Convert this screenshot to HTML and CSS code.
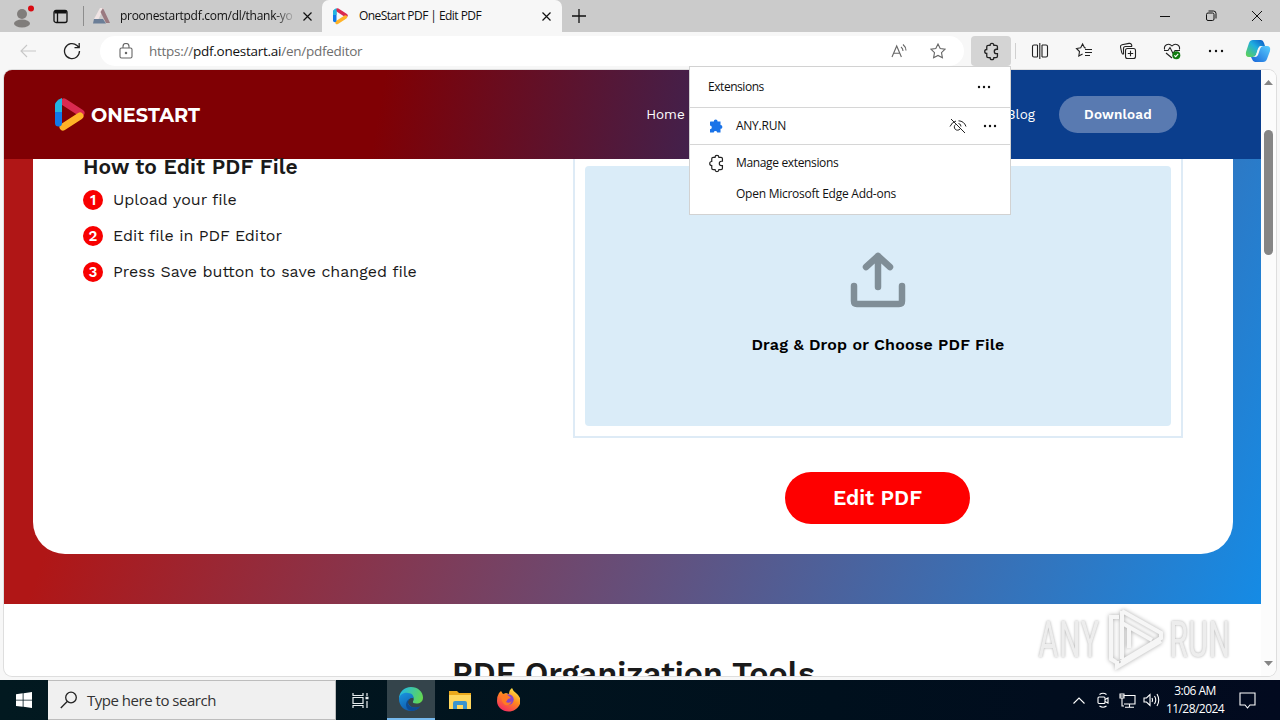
FILE: index.html
```
<!DOCTYPE html>
<html lang="en">
<head>
    <meta charset="UTF-8">
    <meta name="viewport" content="width=device-width, initial-scale=1.0">
    <title>OneStart PDF | Edit PDF</title>
    <link rel="stylesheet" href="styles.css">
</head>
<body>
    <svg class="defs" width="0" height="0">
        <symbol id="puzzle" viewBox="0 0 16 16">
            <path d="M5.2 2.8h1.6a1.6 1.6 0 0 1 3.2 0h1.8q1.2 0 1.2 1.2v2.1h-.8a1.8 1.8 0 0 0 0 3.7h.8V12q0 1.2-1.2 1.2H10a1.6 1.6 0 0 1-3.2 0H5.2Q4 13.200 4 12V9.700A1.700 1.700 0 0 1 4 6.300V4q0-1.200 1.200-1.200z"/>
        </symbol>
        <symbol id="onestart" viewBox="0 0 32 34">
            <path d="M10 4l17 11" stroke="#da2a50" stroke-width="7" stroke-linecap="round"/>
            <path d="M9 29l17-11" stroke="#ffb327" stroke-width="7" stroke-linecap="round"/>
            <path d="M4.500 7v18" stroke="#1178e8" stroke-width="7" stroke-linecap="round"/>
            <path d="M1 14V7q1-5 7-7v14z" fill="#22b5e0"/>
        </symbol>
    </svg>

    <div class="tabstrip">
        <svg class="avatar" width="24" height="28" viewBox="0 0 24 28">
            <circle cx="12" cy="12" r="5" fill="#807d7b"/>
            <ellipse cx="12" cy="21.500" rx="8" ry="4" fill="#807d7b"/>
            <circle cx="21" cy="6.500" r="3" fill="#d90b12"/>
        </svg>
        <svg class="tab-actions" width="15" height="15" viewBox="0 0 15 15" fill="none" stroke="#111" stroke-width="1.300">
            <rect x="1" y="1.500" width="13" height="12" rx="2"/>
            <path d="M1.500 3h12" stroke-width="3"/>
            <path d="M4.500 4v9.500"/>
        </svg>
        <span class="divider"></span>
        <div class="tab">
            <svg width="17" height="16" viewBox="0 0 17 16">
                <path d="M7 0h4L5.500 11H1z" fill="#f0e4e4"/>
                <path d="M10 0l7 15h-4L7.500 4z" fill="#9a7a80"/>
                <path d="M1 11h9l3 4.500H0z" fill="#6b7e97"/>
            </svg>
            <span class="tab-title faded">proonestartpdf.com/dl/thank-yo</span>
            <svg class="x" width="9" height="9" viewBox="0 0 9 9"><path d="M.5.5l8 8M8.500.5l-8 8"/></svg>
        </div>
        <div class="tab active">
            <svg width="17" height="17"><use href="#onestart"/></svg>
            <span class="tab-title">OneStart PDF | Edit PDF</span>
            <svg class="x" width="9" height="9" viewBox="0 0 9 9"><path d="M.5.5l8 8M8.500.5l-8 8"/></svg>
        </div>
        <svg class="newtab" width="14" height="14" viewBox="0 0 14 14"><path d="M7 0v14M0 7h14" stroke="#111" stroke-width="1.300"/></svg>
        <div class="window-buttons">
            <svg width="12" height="12" viewBox="0 0 12 12"><path d="M1 6.500h10"/></svg>
            <svg width="12" height="12" viewBox="0 0 12 12"><rect x="1.500" y="3" width="7.500" height="7.500" rx="1.500"/><path d="M3.500 1h5Q11 1 11 3.500v5"/></svg>
            <svg width="12" height="12" viewBox="0 0 12 12"><path d="M1 1l10 10M11 1L1 11"/></svg>
        </div>
    </div>

    <div class="toolbar">
        <svg class="back" width="16" height="14" viewBox="0 0 16 14"><path d="M16 7H1M7 1L1 7l6 6"/></svg>
        <svg class="reload" width="18" height="18" viewBox="0 0 18 18"><path d="M16.500 9A7.500 7.500 0 1 1 14 3.500L16 5.500M16.200 1v4.700h-4.700"/></svg>
        <div class="address">
            <svg class="lock" width="14" height="16" viewBox="0 0 14 16"><rect x="1" y="5" width="12" height="10" rx="1.500"/><path d="M4 5V3.500a3 3 0 0 1 6 0V5"/><circle cx="7" cy="10" r=".7"/></svg>
            <span class="url">https://<b>pdf.onestart.ai</b>/en/pdfeditor</span>
            <svg class="read" width="16" height="15" viewBox="0 0 16 15"><path d="M1 13L5.700 2l4.700 11M2.700 9.300h6M10 3q2 1.500 2 4M12 .5q3 2.500 3 6"/></svg>
            <svg class="star" width="16" height="16" viewBox="0 0 16 16"><path d="M8 1l2.200 4.500 4.900.7-3.600 3.500.9 5L8 12.400l-4.400 2.300.9-5L.9 6.200l4.900-.7z"/></svg>
        </div>
        <div class="ext-button"><svg width="19" height="19"><use href="#puzzle"/></svg></div>
        <span class="tool-divider"></span>
        <div class="tools">
            <svg width="18" height="18" viewBox="0 0 18 18"><path d="M6.500 3H3Q1.500 3 1.500 4.500v9Q1.500 15 3 15h3.500M11 3h4q1.500 0 1.500 1.500v9Q16.500 15 15 15h-4M6.500 3v12M11 3v12M8.800 1v16"/></svg>
            <svg width="18" height="18" viewBox="0 0 18 18"><path d="M11 6L9.500 5.800 7.600 2 5.700 5.800l-4.200.7 3 3-.7 4.500 3.800-2M10 7.500h7M10 10.500h7M10 13.500h5"/></svg>
            <svg width="18" height="18" viewBox="0 0 18 18"><rect x="6.500" y="6.500" width="10" height="10" rx="2"/><path d="M11.500 8.800v5.400M8.800 11.500h5.400M4.500 12.500Q3 12 2.700 10.500L1.500 5Q1.200 3.200 3 2.800l7-1.400Q12 1 12.500 2.700L13 4.500M4.500 12V6.500Q4.500 4.500 6.500 4.500H13"/></svg>
            <svg width="18" height="18" viewBox="0 0 18 18"><path d="M1.600 7.500C.5 3.500 5.500.2 9 4c3.500-3.800 8.500-.5 7.400 3.500M1 8.500h4l2-3 3 6 2-3h5M3 11l6 5"/><circle cx="13.300" cy="13.300" r="4" fill="#107c10" stroke="none"/><path d="M11.300 13.300l1.400 1.400 2.500-2.800" stroke="#fff"/></svg>
            <svg class="dots" width="18" height="18" viewBox="0 0 18 18"><circle cx="3" cy="9" r="1.200"/><circle cx="9" cy="9" r="1.200"/><circle cx="15" cy="9" r="1.200"/></svg>
        </div>
        <svg class="copilot" width="26" height="24" viewBox="0 0 26 24">
            <defs>
                <linearGradient id="cop1" x1="1" y1="0" x2="0" y2="1"><stop stop-color="#0b52c4"/><stop offset=".45" stop-color="#20aee0"/><stop offset="1" stop-color="#64d54b"/></linearGradient>
                <linearGradient id="cop2" x1="1" y1="0" x2="0" y2="1"><stop stop-color="#59cfff"/><stop offset="1" stop-color="#1764d8"/></linearGradient>
            </defs>
            <path d="M8 1h8q2 0 3 3l1 3h-4q-2 0-3 3l-2 6q-1 2-3 2H4q-4 0-3-5L4 4q1-3 4-3z" fill="url(#cop1)"/>
            <path d="M18 7h4q4 0 3 5l-3 8q-1 3-4 3h-8q-2 0-3-3l-1-2h3q2 0 3-3l2-6q1-2 4-2z" fill="url(#cop2)"/>
            <path d="M16 7h2q-2 0-3 3l-2 6q-1 2-3 2H8q2 0 3-2l2-6q1-3 3-3z" fill="#f7f7f7"/>
        </svg>
    </div>

    <div class="browser-body">
        <div class="page">
            <header class="site-header">
                <svg width="32" height="34"><use href="#onestart"/></svg>
                <span class="brand">ONESTART</span>
                <nav>
                    <a class="home">Home</a>
                    <a class="blog">Blog</a>
                    <a class="download">Download</a>
                </nav>
            </header>
            <section class="hero">
                <div class="card">
                    <div class="how-to">
                        <h2>How to Edit PDF File</h2>
                        <ol>
                            <li><span class="num">1</span><span>Upload your file</span></li>
                            <li><span class="num">2</span><span>Edit file in PDF Editor</span></li>
                            <li><span class="num">3</span><span>Press Save button to save changed file</span></li>
                        </ol>
                    </div>
                    <div class="upload">
                        <div class="drop-frame">
                            <div class="drop-area">
                                <svg width="56" height="56" viewBox="0 0 56 56"><path d="M28 35V4M16 15L28 4 40 15M4 34v15q0 3 3 3h42q3 0 3-3V34"/></svg>
                                <p>Drag &amp; Drop or Choose PDF File</p>
                            </div>
                        </div>
                        <button>Edit PDF</button>
                    </div>
                </div>
            </section>
            <section class="tools-section">
                <h2>PDF Organization Tools</h2>
            </section>
        </div>
        <div class="scrollbar">
            <svg width="9" height="5" viewBox="0 0 9 5"><path d="M0 5l4.500-5L9 5z"/></svg>
            <div class="thumb"></div>
            <svg class="down" width="9" height="5" viewBox="0 0 9 5"><path d="M0 0l4.500 5L9 0z"/></svg>
        </div>
    </div>

    <div class="taskbar">
        <div class="start"><svg width="16" height="16" viewBox="0 0 16 16" fill="#fff"><path d="M0 2.200L6.700 1.300v6.400H0zM7.500 1.200L16 0v7.700H7.500zM0 8.500h6.700v6.300L0 14zM7.500 8.500H16V16l-8.500-1.200z"/></svg></div>
        <div class="search">
            <svg width="18" height="18" viewBox="0 0 18 18" fill="none" stroke="#222" stroke-width="1.300"><circle cx="11" cy="6.500" r="5.300"/><path d="M7.200 10.500L.8 17"/></svg>
            <span>Type here to search</span>
        </div>
        <div class="app"><svg width="17" height="17" viewBox="0 0 17 17" fill="none" stroke="#e8eef0" stroke-width="1.200"><path d="M1 1v2.500h10V1M1 16v-2.500h10V16M1 5.500h10v6H1zM15 1v3M15 9v7"/><path d="M13.500 6h3" stroke-width="2.500"/></svg></div>
        <div class="app current">
            <svg width="24" height="24" viewBox="0 0 24 24">
                <defs>
                    <linearGradient id="edge1" x1="0" y1=".3" x2="1" y2=".6"><stop stop-color="#20b8e9"/><stop offset="1" stop-color="#64d84e"/></linearGradient>
                    <linearGradient id="edge2" x1="0" y1="0" x2=".6" y2="1"><stop stop-color="#1996e0"/><stop offset="1" stop-color="#1056a8"/></linearGradient>
                </defs>
                <path d="M0 12C0 5 5 0 12 0s12 5 12 10.500c0 4-3 6-6.500 6-3 0-4-1-3.500-2 2-3 0-7-5-7-4.500 0-8 2-9 4.500z" fill="url(#edge1)"/>
                <path d="M0 12c0-4 5-7 9-6 4 0 6 3 5.500 5.500C12 10 9 12 9 15c0 5 7 7 12 4.500-2 3-5.500 4.500-9 4.500C5 24 0 18.500 0 12z" fill="url(#edge2)"/>
                <path d="M9 15c-.5 5 6 7 12 4.500-2.500 4-8 5-10.500 3.800C6 21 6 15 10 12z" fill="#0d4b94"/>
            </svg>
        </div>
        <div class="app"><svg width="22" height="20" viewBox="0 0 22 20"><path d="M0 1h8l2 2h12v16H0z" fill="#eba91c"/><path d="M0 5h22v14H0z" fill="#ffd75e"/><path d="M4 19v-6q0-2 2-2h10q2 0 2 2v6h-4v-4H8v4z" fill="#3a94cf"/></svg></div>
        <div class="app">
            <svg width="23" height="24" viewBox="0 0 23 24">
                <defs><linearGradient id="fox" x1=".8" y1="0" x2=".2" y2="1"><stop stop-color="#fff04a"/><stop offset=".45" stop-color="#ff8a1d"/><stop offset="1" stop-color="#f42366"/></linearGradient></defs>
                <path d="M2 5l2-2 2 3 3-1 3 1q0-4 3-6 1 3 4 5 4 3 5 8.500C22 19.500 17.500 23.500 11.500 23.500S0 19 0 13q0-5 2-8z" fill="url(#fox)"/>
                <circle cx="11.500" cy="11.500" r="5.200" fill="#8845c9"/>
                <path d="M4 7q4-2 8 1l2 2-3 1-2 3q3 2 6-1-2 5-7 4-4-3-4-10z" fill="#ff7a24"/>
            </svg>
        </div>
        <div class="tray">
            <svg width="12" height="7" viewBox="0 0 12 7"><path d="M.5 6.500L6 1l5.500 5.500"/></svg>
            <svg width="12" height="16" viewBox="0 0 12 16"><rect x="1" y="5" width="7" height="6.500" rx="1"/><path d="M8 7.500L11 6v5L8 9.500M2.500 2.500Q6 0 9.500 2.500M2.500 14Q6 16.500 9.500 14"/></svg>
            <svg width="17" height="15" viewBox="0 0 17 15"><path d="M5 2.500h11v8.500H5M10.500 11v3M6 14.200h9M1 1h4v4H1zM3 5v8h2M1 3h4"/></svg>
            <svg width="17" height="14" viewBox="0 0 17 14"><path d="M1 5h2.500L7 1.500v11L3.500 9H1zM9 5q1 2 0 4M11.500 3q2.500 4 0 8M14 1q3.500 6 0 12"/></svg>
            <div class="clock"><span>3:06 AM</span><span>11/28/2024</span></div>
            <svg class="notice" width="17" height="17" viewBox="0 0 17 17"><path d="M1 1h15v12h-5l-2.500 3L6 13H1z"/></svg>
        </div>
    </div>

    <div class="popup">
        <div class="popup-head">
            <span>Extensions</span>
            <svg class="dots" width="18" height="18" viewBox="0 0 18 18"><circle cx="4" cy="9" r="1.200"/><circle cx="9" cy="9" r="1.200"/><circle cx="14" cy="9" r="1.200"/></svg>
        </div>
        <div class="popup-item">
            <svg class="blue" width="16" height="16" viewBox="0 0 16 16"><path d="M2.500 3.500h3.300a1.900 1.900 0 0 1 3.800 0h2.900V7a1.900 1.900 0 0 1 0 3.800v3.700H9.200a1.800 1.800 0 0 0-3.500 0H2v-3.300a1.800 1.800 0 0 0 0-3.600V4z"/></svg>
            <span>ANY.RUN</span>
            <svg class="hide" width="18" height="16" viewBox="0 0 18 16"><path d="M2 1l14 14M1 8.500Q3 4 7 3M9.500 2.800Q15 3 17 8.500M6.500 6.500a3.200 3.200 0 1 0 4.500 4.500M9.500 5.500a3 3 0 0 1 2.500 3"/></svg>
            <svg class="dots" width="18" height="18" viewBox="0 0 18 18"><circle cx="4" cy="9" r="1.200"/><circle cx="9" cy="9" r="1.200"/><circle cx="14" cy="9" r="1.200"/></svg>
        </div>
        <div class="popup-links">
            <div class="manage"><svg width="19" height="19"><use href="#puzzle"/></svg><span>Manage extensions</span></div>
            <div class="addons">Open Microsoft Edge Add-ons</div>
        </div>
    </div>

    <div class="watermark">
        <span>ANY</span>
        <svg width="58" height="62" viewBox="0 0 58 62"><path d="M12 9H4v42l5 3M15 3v48M15 3l39 22v5L14 54M15 15l30 17M22 20v20M10 53v6l44-26"/></svg>
        <span>RUN</span>
    </div>
</body>
</html>
```
FILE: styles.css
```
* {
    box-sizing: border-box;
}

body {
    margin: 0;
    width: 1280px;
    height: 720px;
    overflow: hidden;
    position: relative;
    display: flex;
    flex-direction: column;
    background: #f7f7f7;
    font-family: "Open Sans", "Noto Sans", sans-serif;
    color: #111;
}

svg {
    flex-shrink: 0;
}

.defs {
    display: none;
}

h2, p, ol {
    margin: 0;
    padding: 0;
}

/* tabs */
.tabstrip {
    height: 32px;
    flex-shrink: 0;
    display: flex;
    align-items: center;
    background: #cbcbcb;
}

.avatar {
    margin-left: 10px;
}

.tab-actions {
    margin-left: 19px;
}

.divider {
    width: 1px;
    height: 20px;
    margin-left: 15px;
    background: #8d8d8d;
}

.tab {
    width: 238px;
    height: 32px;
    padding: 0 10px 0 9px;
    display: flex;
    align-items: center;
    font-size: 12px;
}

.tab.active {
    width: 240px;
    padding: 0 11px 0 10px;
    background: #f7f7f7;
    border-radius: 7px 7px 0 0;
}

.tab-title {
    width: 176px;
    margin-left: 10px;
    overflow: hidden;
    white-space: nowrap;
    line-height: 18px;
    letter-spacing: -0.28px;
}

.tab.active .tab-title {
    letter-spacing: -0.55px;
}

.faded {
    -webkit-mask-image: linear-gradient(to right, #000 88%, transparent);
    mask-image: linear-gradient(to right, #000 88%, transparent);
}

.x {
    margin-left: auto;
    stroke: #111;
    stroke-width: 1.2;
}

.newtab {
    margin-left: 10px;
}

.window-buttons {
    margin-left: auto;
    padding-right: 17px;
    display: flex;
    gap: 34px;
    fill: none;
    stroke: #111;
}

/* toolbar */
.toolbar {
    height: 38px;
    flex-shrink: 0;
    display: flex;
    align-items: center;
    background: #f7f7f7;
    fill: none;
    stroke: #222;
    stroke-width: 1.1;
}

.back {
    margin-left: 20px;
    stroke: #c7c7c7;
}

.reload {
    margin-left: 27px;
    stroke-width: 1.3;
}

.address {
    width: 864px;
    height: 30px;
    margin-left: 19px;
    padding: 0 18px 0 19px;
    display: flex;
    align-items: center;
    background: #fff;
    border-radius: 15px;
    stroke: #666;
}

.url {
    margin-left: 16px;
    color: #6e6e6e;
    font-size: 13.5px;
    letter-spacing: -0.26px;
}

.url b {
    font-weight: 400;
    color: #111;
}

.read {
    margin-left: auto;
}

.star {
    margin-left: 23px;
}

.ext-button {
    width: 40px;
    height: 30px;
    margin-left: 7px;
    display: flex;
    align-items: center;
    justify-content: center;
    border-radius: 4px;
    background: #d4d4d4;
}

.tool-divider {
    width: 1px;
    height: 16px;
    margin-left: 4px;
    background: #d0d0d0;
}

.tools {
    margin-left: 15px;
    display: flex;
    gap: 26px;
}

.dots {
    fill: #111;
    stroke: none;
}

.copilot {
    margin-left: 20px;
    stroke: none;
}

/* page */
.browser-body {
    height: 606px;
    margin: 0 4px 4px;
    display: flex;
    border-radius: 8px;
    overflow: hidden;
    background: #fff;
    box-shadow: 0 0 0 1px #dedede;
    flex-shrink: 0;
}

.page {
    width: 1257px;
    font-family: "Work Sans", Inter, sans-serif;
    overflow: hidden;
}

.site-header {
    height: 89px;
    padding: 0 84px 0 50px;
    display: flex;
    align-items: center;
    background: linear-gradient(100deg, #800004 30%, #0b3e8d 78%);
    color: #fff;
}

.brand {
    margin-left: 5px;
    font-family: Montserrat, Inter, sans-serif;
    font-size: 19.3px;
    line-height: 24px;
    font-weight: 700;
}

nav {
    margin-left: auto;
    display: flex;
    align-items: center;
    font-size: 13.5px;
    line-height: 16px;
}

.home, .blog {
    margin-bottom: 2px;
}

.blog {
    margin-left: 322px;
}

.download {
    width: 118px;
    height: 37px;
    margin-left: 24px;
    padding-bottom: 1px;
    display: flex;
    align-items: center;
    justify-content: center;
    border-radius: 19px;
    background: #597ab1;
    font-weight: 600;
    letter-spacing: 0.2px;
}

.hero {
    height: 445px;
    padding: 0 28px 50px 29px;
    background: linear-gradient(110deg, #b01616 13%, #158be5 100%);
}

.card {
    height: 395px;
    padding: 0 50px;
    display: flex;
    justify-content: space-between;
    background: #fff;
    border-radius: 0 0 32px 32px;
    color: #1a1a1a;
}

.how-to h2 {
    margin-top: -5px;
    font-size: 21px;
    line-height: 26px;
    font-weight: 600;
    letter-spacing: 0.1px;
}

.how-to ol {
    margin-top: 10px;
    list-style: none;
}

.how-to li {
    height: 20px;
    margin-bottom: 16px;
    display: flex;
    align-items: flex-start;
    gap: 10px;
    font-size: 16px;
    line-height: 20px;
}

.num {
    width: 20px;
    height: 20px;
    border-radius: 50%;
    background: #f80000;
    color: #fff;
    font-size: 15px;
    font-weight: 600;
    text-align: center;
}

.upload {
    width: 610px;
    display: flex;
    flex-direction: column;
    align-items: center;
}

.drop-frame {
    width: 610px;
    height: 279px;
    padding: 7px 10px 10px;
    border: 2px solid #deebf6;
    border-top: 0;
}

.drop-area {
    height: 260px;
    display: flex;
    flex-direction: column;
    align-items: center;
    border-radius: 4px;
    background: #daecf8;
    color: #000;
}

.drop-area svg {
    margin-top: 86px;
    fill: none;
    stroke: #808e97;
    stroke-width: 6.5;
    stroke-linecap: round;
    stroke-linejoin: round;
}

.drop-area p {
    margin-top: 27px;
    font-size: 16px;
    line-height: 20px;
    font-weight: 600;
    letter-spacing: 0.2px;
}

.upload button {
    width: 185px;
    height: 52px;
    margin: 34px 1px 0 0;
    padding: 0 0 2px;
    border: 0;
    border-radius: 26px;
    background: #fe0000;
    color: #fff;
    font-family: inherit;
    font-size: 21px;
    font-weight: 600;
}

.tools-section {
    padding-top: 48px;
}

.tools-section h2 {
    padding-left: 2px;
    text-align: center;
    font-size: 32px;
    line-height: 42px;
    font-weight: 600;
    letter-spacing: 0.05px;
    color: #1a1a1a;
}

.scrollbar {
    width: 15px;
    padding: 10px 0;
    display: flex;
    flex-direction: column;
    align-items: center;
    background: #fcfcfc;
    fill: #858585;
}

.thumb {
    width: 9px;
    height: 125px;
    margin-top: 45px;
    border-radius: 5px;
    background: #858585;
}

.down {
    margin-top: auto;
}

/* taskbar */
.taskbar {
    height: 40px;
    flex-shrink: 0;
    display: flex;
    background: linear-gradient(to right, #021920, #00101d 65%, #020a1f);
}

.start {
    width: 48px;
    display: flex;
    align-items: center;
    justify-content: center;
}

.search {
    width: 288px;
    padding-left: 12px;
    display: flex;
    align-items: center;
    gap: 9px;
    background: #f0f0f0;
    border: 1px solid #bdbdbd;
    border-left: 0;
    color: #333;
    font-size: 15px;
    letter-spacing: -0.48px;
}

.app {
    width: 49px;
    display: flex;
    align-items: center;
    justify-content: center;
}

.app.current {
    margin-left: 2px;
    width: 48px;
    background: #34444b;
    border-bottom: 2px solid #76b9ed;
}

.tray {
    margin-left: auto;
    padding-right: 24px;
    display: flex;
    align-items: center;
    color: #fff;
    fill: none;
    stroke: #fff;
    stroke-width: 1.1;
}

.tray svg + svg {
    margin-left: 10px;
}

.tray svg:nth-child(2) {
    margin-left: 12px;
}

.tray svg:nth-child(4) {
    margin-left: 7px;
}

.clock {
    width: 62px;
    margin-left: 4px;
    display: flex;
    flex-direction: column;
    align-items: center;
    font-size: 12px;
    line-height: 18px;
    letter-spacing: -0.55px;
    stroke: none;
}

.notice {
    margin-left: 13px;
}

/* extensions menu */
.popup {
    position: absolute;
    left: 689px;
    top: 66px;
    width: 322px;
    height: 149px;
    background: #fff;
    border: 1px solid #d2d2d2;
    font-size: 12px;
    letter-spacing: -0.25px;
}

.popup-head {
    height: 41px;
    padding: 0 17px 0 18px;
    display: flex;
    align-items: center;
    justify-content: space-between;
    border-bottom: 1px solid #d6d6d6;
}

.popup-head span {
    letter-spacing: -0.45px;
}

.popup-item {
    height: 37px;
    padding: 0 11px 0 18px;
    display: flex;
    align-items: center;
    border-bottom: 1px solid #d6d6d6;
}

.popup-item span {
    margin-left: 12px;
}

.blue {
    fill: #1a73e8;
}

.hide {
    margin-left: auto;
    margin-right: 14px;
    fill: none;
    stroke: #222;
}

.manage {
    height: 36px;
    padding-left: 17px;
    display: flex;
    align-items: center;
    gap: 10px;
    fill: none;
    stroke: #222;
}

.popup-head span, .popup-item span, .manage span {
    padding-bottom: 1px;
}

.manage span {
    letter-spacing: -0.35px;
}

.addons {
    padding-left: 46px;
    line-height: 26px;
}

/* recording watermark */
.watermark {
    position: absolute;
    left: 1038px;
    top: 605px;
    display: flex;
    align-items: center;
    gap: 4px;
    color: #ededed;
    font: 400 50px/66px "Roboto Condensed", Roboto, sans-serif;
    text-shadow: 0 0 3px #aaa;
}

.watermark span {
    width: 65px;
    padding-top: 2px;
    transform: scaleX(0.72);
    transform-origin: left;
}

.watermark svg {
    fill: none;
    stroke: #f6f6f6;
    stroke-width: 4;
    filter: drop-shadow(0 0 2px #aaa);
}
```
